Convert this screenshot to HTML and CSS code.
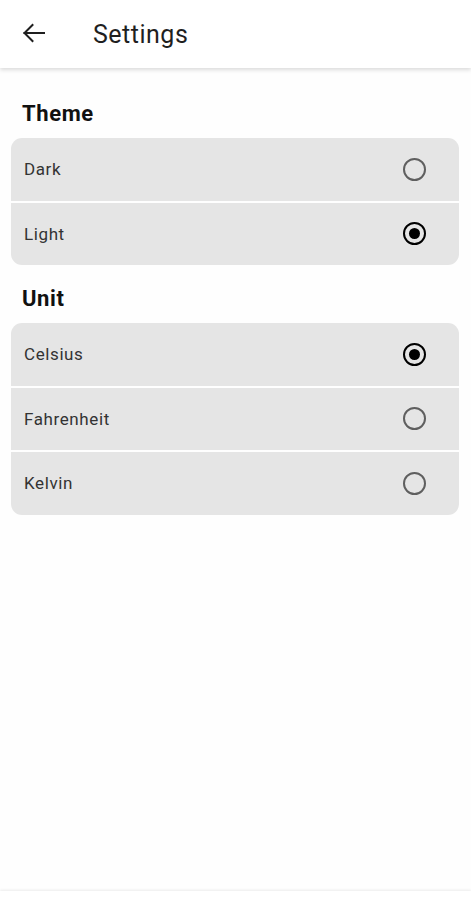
FILE: index.html
```html
<!DOCTYPE html>
<html lang="en">
<head>
<meta charset="utf-8">
<title>Settings</title>
<link rel="stylesheet" href="styles.css">
</head>
<body>
<div class="app">
  <header class="appbar">
    <button class="back" aria-label="Back">
      <svg width="24" height="20" viewBox="0 0 24 20" fill="none" stroke="#1f1f1f" stroke-width="2" stroke-linecap="square" stroke-linejoin="miter">
        <path d="M2.5 10H22"/>
        <path d="M10.5 2L2.5 10L10.5 18"/>
      </svg>
    </button>
    <h1 class="title">Settings</h1>
  </header>
  <main class="content">
    <section class="section">
      <h2 class="section-title">Theme</h2>
      <div class="card">
        <div class="row"><span class="label">Dark</span><span class="radio"></span></div>
        <div class="row"><span class="label">Light</span><span class="radio checked"></span></div>
      </div>
    </section>
    <section class="section">
      <h2 class="section-title">Unit</h2>
      <div class="card">
        <div class="row"><span class="label">Celsius</span><span class="radio checked"></span></div>
        <div class="row"><span class="label">Fahrenheit</span><span class="radio"></span></div>
        <div class="row"><span class="label">Kelvin</span><span class="radio"></span></div>
      </div>
    </section>
  </main>
  <footer class="bottombar"></footer>
</div>
</body>
</html>
```

FILE: styles.css
```css
* { box-sizing: border-box; }
html, body { margin: 0; padding: 0; }
body {
  background: #fefefe;
  font-family: Roboto, "Noto Sans", "Liberation Sans", sans-serif;
  color: #1c1c1c;
}
.app {
  display: flex;
  flex-direction: column;
  height: 100vh;
}
.appbar {
  height: 68px;
  flex: none;
  display: flex;
  align-items: center;
  background: #ffffff;
  box-shadow: 0 2px 4px rgba(0, 0, 0, 0.14);
  position: relative;
  z-index: 1;
  padding-left: 22px;
}
.back {
  border: 0;
  background: none;
  padding: 0;
  width: 24px;
  height: 20px;
  display: flex;
  align-items: center;
  justify-content: center;
  margin-top: -2px;
}
.title {
  margin: 0 0 0 47px;
  font-size: 25px;
  font-weight: 400;
  color: #1f1f1f;
  letter-spacing: 0.5px;
}
.content {
  flex: 1;
  padding: 12px 12px 0 11px;
}
.section { padding-top: 20px; }
.section-title {
  margin: 0 0 10px 11px;
  font-size: 22px;
  line-height: 28px;
  font-weight: 700;
  color: #111;
  letter-spacing: 0.6px;
}
.card {
  background: #fefefe;
  border-radius: 11px;
  overflow: hidden;
  display: flex;
  flex-direction: column;
  gap: 2px;
}
.row {
  height: 62.5px;
  background: #e5e5e5;
  display: flex;
  align-items: center;
  justify-content: space-between;
  padding: 0 33px 0 13px;
}
.label {
  font-size: 17px;
  color: #333;
  letter-spacing: 0.6px;
}
.radio {
  width: 23px;
  height: 23px;
  border-radius: 50%;
  border: 2px solid #5f5f5f;
  display: flex;
  align-items: center;
  justify-content: center;
}
.radio.checked {
  border-color: #000;
  border-width: 2.5px;
}
.radio.checked::after {
  content: "";
  width: 11px;
  height: 11px;
  border-radius: 50%;
  background: #000;
}
.bottombar {
  flex: none;
  height: 9px;
  background: #ffffff;
  box-shadow: 0 -1px 3px rgba(0, 0, 0, 0.08);
}
```
